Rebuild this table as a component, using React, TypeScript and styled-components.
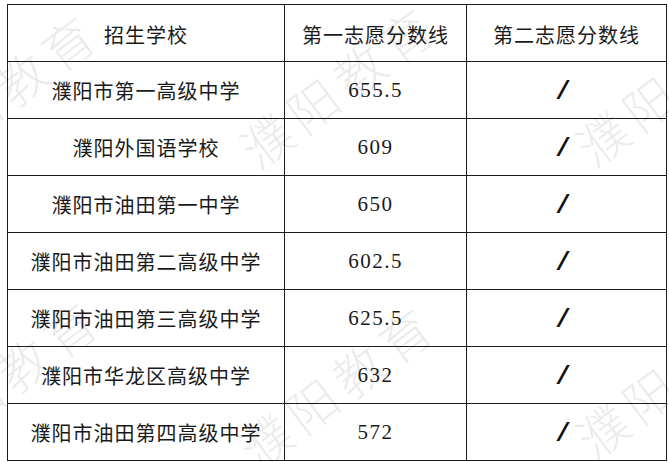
import styled, { createGlobalStyle } from "styled-components";

const ROWS = [
  { school: "濮阳市第一高级中学", first: "655.5" },
  { school: "濮阳外国语学校", first: "609" },
  { school: "濮阳市油田第一中学", first: "650" },
  { school: "濮阳市油田第二高级中学", first: "602.5" },
  { school: "濮阳市油田第三高级中学", first: "625.5" },
  { school: "濮阳市华龙区高级中学", first: "632" },
  { school: "濮阳市油田第四高级中学", first: "572" },
];

// centres of the repeated watermark text
const MARKS = [
  { x: 0, y: 92 },
  { x: 338, y: 84 },
  { x: 674, y: 82 },
  { x: 2, y: 378 },
  { x: 337, y: 384 },
  { x: 674, y: 374 },
];

const GlobalStyle = createGlobalStyle`
  html, body {
    margin: 0;
    padding: 0;
    background: #ffffff;
  }
`;

function App() {
  return (
    <>
      <GlobalStyle />
      <Page>
        <ScoreTable>
          <colgroup>
            <col style={{ width: 277 }} />
            <col style={{ width: 182 }} />
            <col style={{ width: 200 }} />
          </colgroup>
          <thead>
            <tr>
              <HeadCell>招生学校</HeadCell>
              <HeadCell>第一志愿分数线</HeadCell>
              <HeadCell>第二志愿分数线</HeadCell>
            </tr>
          </thead>
          <tbody>
            {ROWS.map((row) => (
              <tr key={row.school}>
                <Cell>{row.school}</Cell>
                <NumCell>{row.first}</NumCell>
                <Cell>
                  <Slash>/</Slash>
                </Cell>
              </tr>
            ))}
          </tbody>
        </ScoreTable>
        <Watermarks>
          {MARKS.map((m, i) => (
            <Mark key={i} style={{ left: m.x, top: m.y }}>
              濮阳教育
            </Mark>
          ))}
        </Watermarks>
      </Page>
    </>
  );
}
export default App;

const Page = styled.div`
  position: relative;
  width: 669px;
  height: 462px;
  overflow: hidden;
  padding: 4px 0 0 7px;
  box-sizing: border-box;
  background: #ffffff;
`;

const ScoreTable = styled.table`
  width: 659px;
  border-collapse: collapse;
  table-layout: fixed;
  border: 1px solid #3a3a3a;

  tr {
    height: 57px;
  }
`;

const HeadCell = styled.th`
  border: 1px solid #1c1c1c;
  padding: 3px 0 0;
  font-family: "Noto Sans CJK SC", sans-serif;
  font-weight: 400;
  font-size: 20px;
  letter-spacing: 1px;
  color: #1a1a1a;
  text-align: center;
  vertical-align: middle;
`;

const Cell = styled.td`
  border: 1px solid #1c1c1c;
  padding: 0;
  font-family: "Noto Sans CJK SC", sans-serif;
  font-size: 20px;
  letter-spacing: 1px;
  color: #1a1a1a;
  text-align: center;
  vertical-align: middle;
`;

const NumCell = styled(Cell)`
  font-family: "Liberation Serif", "DejaVu Serif", serif;
  font-size: 21px;
  letter-spacing: 1.5px;
`;

const Slash = styled.span`
  display: inline-block;
  font-family: "Liberation Mono", monospace;
  font-weight: 700;
  font-size: 26px;
  line-height: 1;
  margin-right: 6px;
  color: #111111;
`;

const Watermarks = styled.div`
  position: absolute;
  inset: 0;
  pointer-events: none;
`;

const Mark = styled.div`
  position: absolute;
  transform: translate(-50%, -50%) rotate(-37deg);
  white-space: nowrap;
  font-family: "Noto Sans CJK SC", sans-serif;
  font-weight: 300;
  font-size: 50px;
  letter-spacing: 8px;
  color: rgba(0, 0, 0, 0.08);
`;
